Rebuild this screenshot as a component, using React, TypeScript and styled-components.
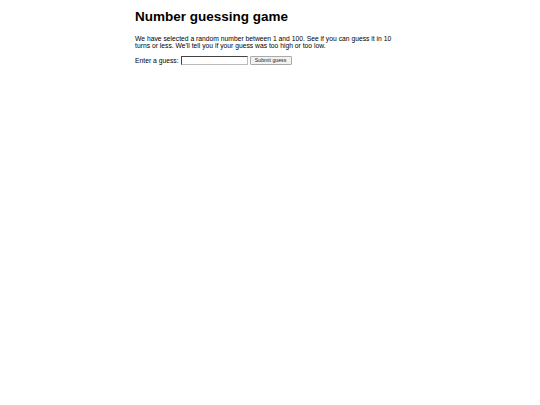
import React from 'react'
import styled, { createGlobalStyle } from 'styled-components'

const GlobalStyle = createGlobalStyle`
  html, body {
    margin: 0;
    padding: 0;
    background: #fff;
  }
  body {
    font-family: "Liberation Sans", Arial, sans-serif;
    color: #000;
  }
`

const Page = styled.main`
  width: 270px;
  margin: 0 auto;
  padding-top: 8px;
`

const Title = styled.h1`
  margin: 0 0 10px;
  font-size: 13.5px;
  line-height: 17px;
  font-weight: bold;
`

const Intro = styled.p`
  margin: 0 0 7px;
  font-size: 6.75px;
  line-height: 7px;
`

const GuessForm = styled.form`
  display: flex;
  align-items: center;
  font-size: 6.75px;
`

const Label = styled.label`
  margin-right: 2px;
`

const GuessInput = styled.input`
  box-sizing: border-box;
  width: 67px;
  height: 9px;
  padding: 0 1px;
  border: 1px solid;
  border-color: #444 #bbb #bbb #444;
  border-radius: 0;
  font-size: 6px;
  margin: 0 2px 0 0;
`

const SubmitButton = styled.button`
  box-sizing: border-box;
  height: 9px;
  width: 42px;
  padding: 0;
  font-family: "Liberation Sans", Arial, sans-serif;
  font-size: 5.2px;
  line-height: 7px;
  background: #f2f2f2;
  border: 1px solid #aaa;
  border-radius: 1px;
  color: #222;
`

export default function App() {
  return (
    <>
      <GlobalStyle />
      <Page>
        <Title>Number guessing game</Title>
        <Intro>
          We have selected a random number between 1 and 100. See if you can guess it in 10
          turns or less. We'll tell you if your guess was too high or too low.
        </Intro>
        <GuessForm onSubmit={(e) => e.preventDefault()}>
          <Label htmlFor="guessField">Enter a guess: </Label>
          <GuessInput type="number" id="guessField" />
          <SubmitButton type="submit">Submit guess</SubmitButton>
        </GuessForm>
      </Page>
    </>
  )
}
